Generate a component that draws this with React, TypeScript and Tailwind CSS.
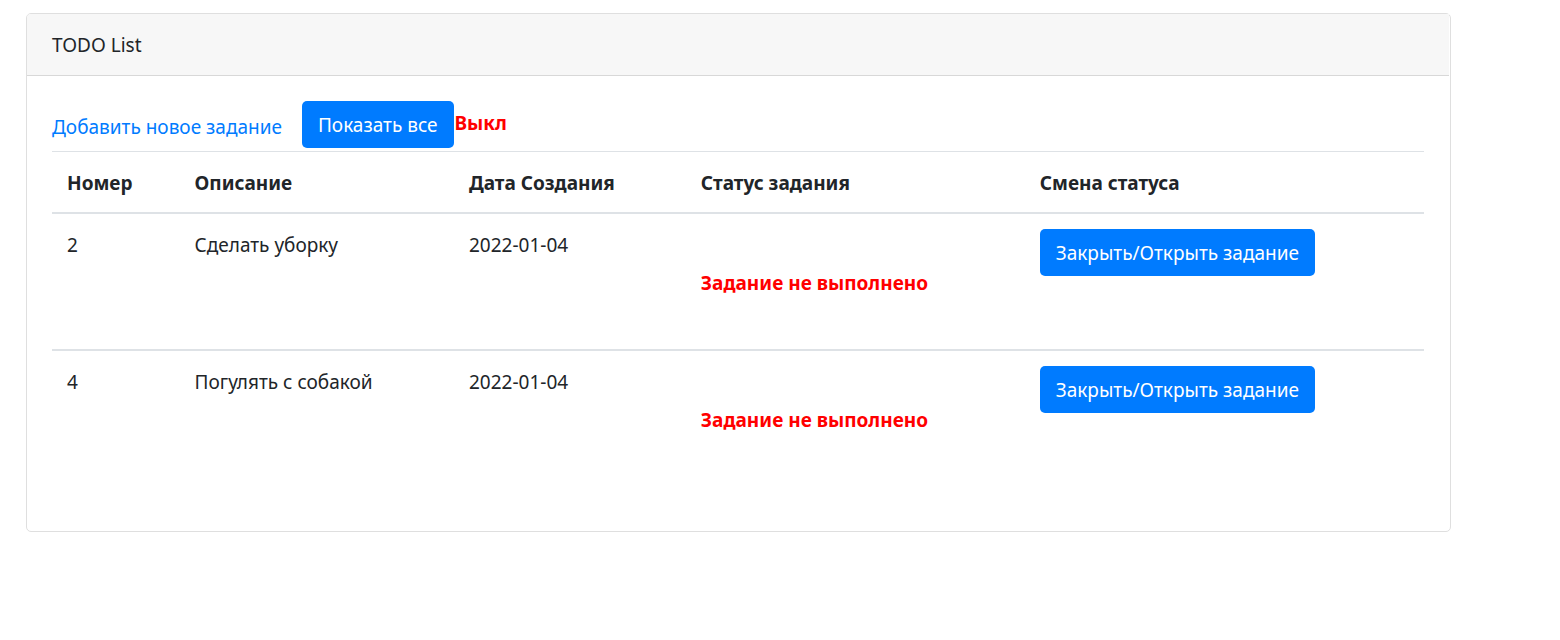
const tasks = [
  { id: 2, title: 'Сделать уборку', date: '2022-01-04' },
  { id: 4, title: 'Погулять с собакой', date: '2022-01-04' },
];

export default function App() {
  return (
    <main className="min-h-screen bg-white pt-[13px] pr-[109px] pl-[26px] font-['Noto_Sans','Open_Sans',sans-serif] text-[19px] leading-7 text-[#212529]">
      <section className="rounded-[5px] border border-[#dfdfdf] bg-white pr-px">
        <header className="rounded-tl border-b border-[#d8d8d8] bg-[#f7f7f7] px-[25px] pt-[17px] pb-4">TODO List</header>
        <div className="px-[25px] pt-[25px] pb-11">
          <div className="flex items-center pb-[3px]">
            <a href="#new" className="mr-5 pt-1 text-[#007bff]">Добавить новое задание</a>
            <button type="button" className="h-[47px] rounded-[5px] bg-[#007bff] px-4 text-white">Показать все</button>
            <span className="pb-1 pl-px font-bold text-[#ff0000]">Выкл</span>
          </div>
          <table className="w-full table-fixed border-collapse text-left">
            <colgroup>
              <col className="w-[9.3%]" />
              <col className="w-[20%]" />
              <col className="w-[16.9%]" />
              <col className="w-[24.7%]" />
              <col className="w-[29.1%]" />
            </colgroup>
            <thead>
              <tr className="h-[61px] border-t border-b-2 border-[#dee2e6]">
                <th className="px-[15px] pt-[2px] font-bold">Номер</th>
                <th className="px-[15px] pt-[2px] font-bold">Описание</th>
                <th className="px-[15px] pt-[2px] font-bold">Дата Создания</th>
                <th className="px-[15px] pt-[2px] font-bold">Статус задания</th>
                <th className="px-[15px] pt-[2px] font-bold">Смена статуса</th>
              </tr>
            </thead>
            <tbody>
              {tasks.map((t) => (
                <tr key={t.id} className="h-[137px] border-t-2 border-[#dee2e6] align-top">
                  <td className="px-[15px] pt-[17px]">{t.id}</td>
                  <td className="px-[15px] pt-[17px]">{t.title}</td>
                  <td className="px-[15px] pt-[17px]">{t.date}</td>
                  <td className="px-[15px] pt-[55px] font-bold text-[#ff0000]">Задание не выполнено</td>
                  <td className="px-[15px] pt-[15px]">
                    <button type="button" className="h-[47px] rounded-[5px] bg-[#007bff] px-4 pt-px text-white">Закрыть/Открыть задание</button>
                  </td>
                </tr>
              ))}
            </tbody>
          </table>
        </div>
      </section>
    </main>
  );
}
